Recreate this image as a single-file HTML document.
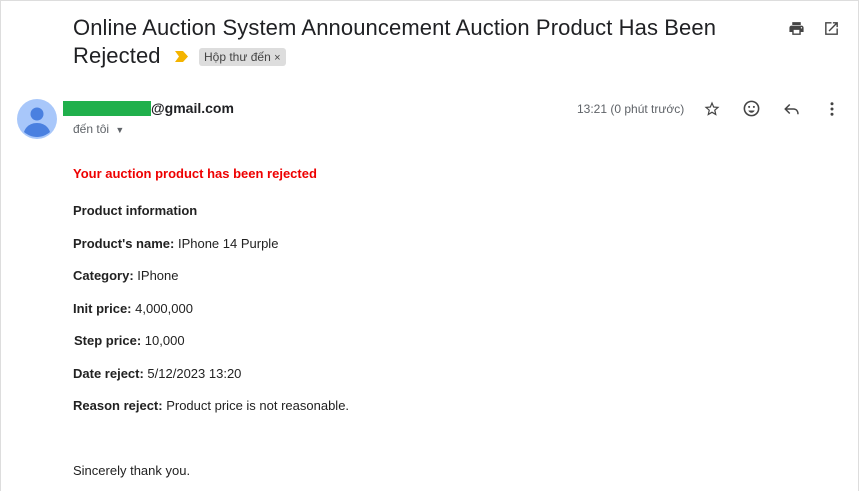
<!DOCTYPE html>
<html><head><meta charset="utf-8"><style>
body{margin:0;width:861px;height:491px;overflow:hidden;background:#fff;font-family:"Liberation Sans",Arial,sans-serif;position:relative}
.frame{position:absolute;left:0;top:0;width:859px;height:491px;border-left:1px solid #ddd;border-right:1px solid #ddd;border-top:1px solid #ddd;box-sizing:border-box}
.t{position:absolute;white-space:nowrap}
.title{left:73px;top:14px;font-size:22px;color:#202124;line-height:28px;letter-spacing:0.1px}
.b{font-size:13px;color:#222;left:73px}
.b b{font-weight:bold}
</style></head><body>
<div class="frame"></div>
<div class="t title">Online Auction System Announcement Auction Product Has Been<br>Rejected</div>
<svg class="t" style="left:175px;top:51px" width="13" height="11" viewBox="0 0 13 11"><path d="M0 0h8l5 5.5-5 5.5H0l4-5.5z" fill="#f4b400"/></svg>
<div class="t" style="left:199px;top:48px;height:18px;padding:0 5px;background:#ddd;border-radius:3px;font-size:12px;color:#444;line-height:18px">Hộp thư đến <span style="font-size:11px">×</span></div>
<svg class="t" style="left:788px;top:20px" width="17" height="17" viewBox="0 0 24 24"><path d="M19 8H5c-1.7 0-3 1.3-3 3v6h4v4h12v-4h4v-6c0-1.7-1.3-3-3-3zm-3 11H8v-5h8v5zm3-7c-.6 0-1-.4-1-1s.4-1 1-1 1 .4 1 1-.4 1-1 1zM18 3H6v4h12z" fill="#444"/></svg>
<svg class="t" style="left:823px;top:20px" width="17" height="17" viewBox="0 0 24 24"><path d="M19 19H5V5h7V3H3v18h18v-9h-2zM14 3v2h3.6l-9.8 9.8 1.4 1.4L19 6.4V10h2V3z" fill="#444"/></svg>
<svg class="t" style="left:17px;top:99px" width="40" height="40" viewBox="0 0 40 40"><circle cx="20" cy="20" r="20" fill="#a8c7fa"/><circle cx="20" cy="15" r="6.5" fill="#4a80e0"/><path d="M7 33c2-6 7-9 13-9s11 3 13 9c-3.5 3-8 5-13 5s-9.5-2-13-5z" fill="#4a80e0"/></svg>
<div class="t" style="left:63px;top:101px;width:88px;height:15px;background:#20b04c"></div>
<div class="t" style="left:151px;top:100px;font-size:14px;font-weight:bold;color:#202124">@gmail.com</div>
<div class="t" style="left:73px;top:122px;font-size:12px;color:#5f6368">đến tôi <span style="font-size:9px;margin-left:3px">▼</span></div>
<div class="t" style="left:577px;top:102px;font-size:12px;color:#5f6368">13:21 (0 phút trước)</div>
<svg class="t" style="left:703px;top:100px" width="18" height="18" viewBox="0 0 24 24"><path d="M22 9.2l-7.2-.6L12 2 9.2 8.6 2 9.2l5.5 4.7L5.8 21 12 17.3 18.2 21l-1.6-7.1zM12 15.4l-3.8 2.3 1-4.3-3.3-2.9 4.4-.4L12 6.1l1.7 4 4.4.4-3.3 2.9 1 4.3z" fill="#444"/></svg>
<svg class="t" style="left:742px;top:99px" width="19" height="19" viewBox="0 0 24 24"><circle cx="12" cy="12" r="9" fill="none" stroke="#444" stroke-width="2"/><circle cx="9" cy="10" r="1.3" fill="#444"/><circle cx="15" cy="10" r="1.3" fill="#444"/><path d="M8 14.5h8c-.8 1.8-2.3 2.8-4 2.8s-3.2-1-4-2.8z" fill="#444"/></svg>
<svg class="t" style="left:783px;top:100px" width="18" height="18" viewBox="0 0 24 24"><path d="M9 6L3 12l6 6M3 12h11c4 0 6 3 6 7" fill="none" stroke="#444" stroke-width="2"/></svg>
<svg class="t" style="left:823px;top:100px" width="18" height="18" viewBox="0 0 24 24"><circle cx="12" cy="5" r="2" fill="#444"/><circle cx="12" cy="12" r="2" fill="#444"/><circle cx="12" cy="19" r="2" fill="#444"/></svg>
<div class="t b" style="top:166px;color:#e00;font-weight:bold">Your auction product has been rejected</div>
<div class="t b" style="top:203px"><b>Product information</b></div>
<div class="t b" style="top:236px"><b>Product's name:</b> IPhone 14 Purple</div>
<div class="t b" style="top:268px"><b>Category:</b> IPhone</div>
<div class="t b" style="top:301px"><b>Init price:</b> 4,000,000</div>
<div class="t b" style="top:333px;left:74px"><b>Step price:</b> 10,000</div>
<div class="t b" style="top:366px"><b>Date reject:</b> 5/12/2023 13:20</div>
<div class="t b" style="top:398px"><b>Reason reject:</b> Product price is not reasonable.</div>
<div class="t b" style="top:463px">Sincerely thank you.</div>
</body></html>
